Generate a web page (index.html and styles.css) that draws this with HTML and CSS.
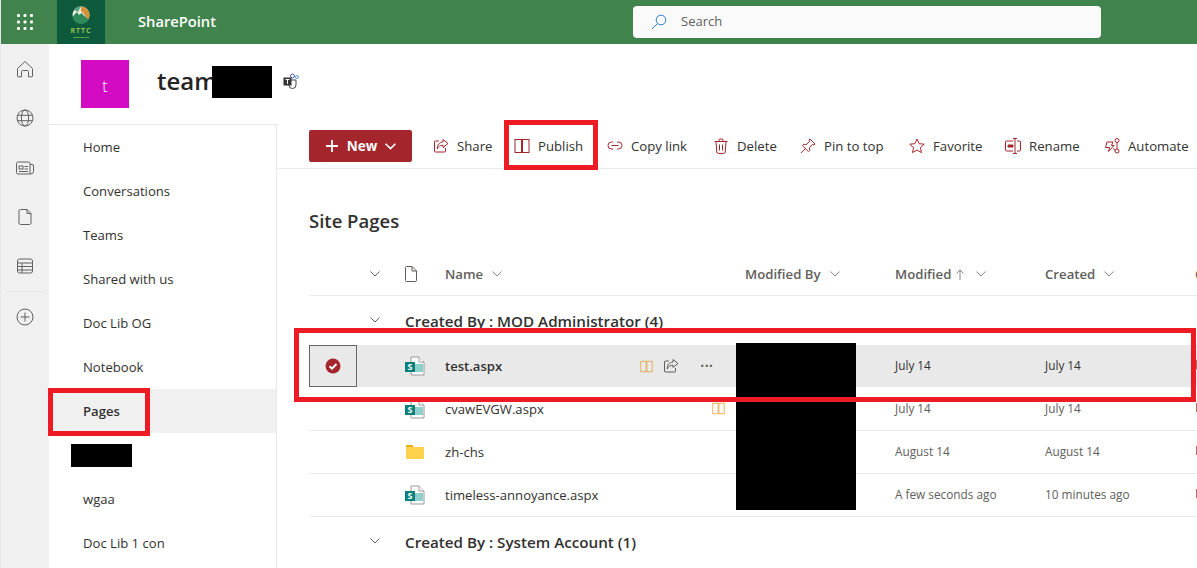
FILE: index.html
```html
<!DOCTYPE html>
<html lang="en">
<head>
  <meta charset="UTF-8">
  <meta name="viewport" content="width=device-width, initial-scale=1.0">
  <title>Site Pages - SharePoint</title>
  <link rel="stylesheet" href="styles.css">
</head>
<body>
  <svg class="defs" width="0" height="0" aria-hidden="true">
    <symbol id="i-book" viewBox="0 0 16 16">
      <rect x="1" y="1.500" width="6.500" height="13" fill="none" stroke="currentColor"/>
      <rect x="8.500" y="1.500" width="6.500" height="13" fill="none" stroke="currentColor"/>
    </symbol>
    <symbol id="i-share" viewBox="0 0 16 16">
      <path d="M6 3H2.500A1 1 0 0 0 1.500 4v9a1 1 0 0 0 1 1h9a1 1 0 0 0 1-1v-3" fill="none" stroke="currentColor"/>
      <path d="M10 1.500l5 4-5 4V7.200C7.500 7.200 5.500 8.300 4.200 11c0-4 2-6.800 5.800-7z" fill="none" stroke="currentColor"/>
    </symbol>
    <symbol id="i-page" viewBox="0 0 12 16">
      <path d="M1.500.5H7L11.500 5v9.500a1 1 0 0 1-1 1h-9a1 1 0 0 1-1-1v-13a1 1 0 0 1 1-1zM7 .5V5h4.500" fill="none" stroke="currentColor"/>
    </symbol>
    <symbol id="i-chev" viewBox="0 0 10 6">
      <path d="M.5.500 5 5 9.500.500" fill="none" stroke="currentColor"/>
    </symbol>
    <symbol id="i-spfile" viewBox="0 0 20 20">
      <path d="M6 1h8l5 5v13H6z" fill="#fff" stroke="#9a9a9a"/>
      <path d="M14 1v5h5" fill="#fff" stroke="#9a9a9a"/>
      <rect x="9" y="8" width="9" height="8" fill="#8fd0cc"/>
      <rect x="0" y="6" width="10" height="10" fill="#07807c"/>
    </symbol>
  </svg>

  <header class="topbar">
    <div class="waffle">
      <svg width="16" height="16" viewBox="0 0 16 16" fill="#fff">
        <rect x="0" y="0" width="3" height="3" rx="1"/><rect x="6.500" y="0" width="3" height="3" rx="1"/><rect x="13" y="0" width="3" height="3" rx="1"/>
        <rect x="0" y="6.500" width="3" height="3" rx="1"/><rect x="6.500" y="6.500" width="3" height="3" rx="1"/><rect x="13" y="6.500" width="3" height="3" rx="1"/>
        <rect x="0" y="13" width="3" height="3" rx="1"/><rect x="6.500" y="13" width="3" height="3" rx="1"/><rect x="13" y="13" width="3" height="3" rx="1"/>
      </svg>
    </div>
    <div class="org-logo">
      <svg width="18" height="18" viewBox="0 0 18 18">
        <circle cx="9" cy="9" r="8.500" fill="#f1efe0"/>
        <path d="M9 .5a8.500 8.500 0 0 1 8.500 8.500c0 2-.6 3.600-1.600 5L12 8 9 5z" fill="#d39238"/>
        <path d="M2 4a8.500 8.500 0 0 1 7-3.500L6 6z" fill="#5aa58a"/>
        <path d="M.6 10.500 5 6l2 3 2.500-2 3 3 4 3.500A8.500 8.500 0 0 1 .6 10.500z" fill="#2f8a5a"/>
      </svg>
      <span class="org-name">RTTC</span>
      <span class="org-line"></span>
    </div>
    <div class="app-name">SharePoint</div>
    <div class="search">
      <svg width="16" height="16" viewBox="0 0 16 16" fill="none" stroke="#2b7cd3"><circle cx="10" cy="6" r="4.800"/><path d="M6.500 9.500 1 15"/></svg>
      <span>Search</span>
    </div>
  </header>

  <div class="app">
    <aside class="rail">
      <svg width="18" height="18" viewBox="0 0 18 18" fill="none" stroke="currentColor"><path d="M1.500 8.500 9 1.500l7.500 7V16a.8.800 0 0 1-.8.800h-3.200V11.500a1 1 0 0 0-1-1h-5a1 1 0 0 0-1 1v5.300H2.300a.8.800 0 0 1-.8-.8z"/></svg>
      <svg width="18" height="18" viewBox="0 0 18 18" fill="none" stroke="currentColor"><circle cx="9" cy="9" r="8"/><ellipse cx="9" cy="9" rx="3.600" ry="8"/><path d="M1.500 6.300h15M1.500 11.700h15"/></svg>
      <svg width="18" height="18" viewBox="0 0 18 18" fill="none" stroke="currentColor"><path d="M14 15H2a1.500 1.500 0 0 1-1.500-1.500v-9A1.500 1.500 0 0 1 2 3h10.500A1.500 1.500 0 0 1 14 4.500V15a3 3 0 0 0 3.500-2.500V6L14 5"/><rect x="3" y="7" width="4" height="3"/><path d="M8.500 7.500h3.500M8.500 10h3.500M3 12.500h9"/></svg>
      <svg width="18" height="18" viewBox="0 0 18 18" fill="none" stroke="currentColor"><path d="M4.500 1.500H11L15 5.500V15a1.500 1.500 0 0 1-1.500 1.500h-9A1.500 1.500 0 0 1 3 15V3a1.500 1.500 0 0 1 1.500-1.500zM11 1.500v4h4"/></svg>
      <svg width="18" height="18" viewBox="0 0 18 18" fill="none" stroke="currentColor"><rect x="1.500" y="2" width="15" height="14" rx="2"/><path d="M1.500 6h15M1.500 9.500h15M1.500 13h15M6 6v10"/></svg>
      <div class="rail-sep"></div>
      <svg width="18" height="18" viewBox="0 0 18 18" fill="none" stroke="currentColor"><circle cx="9" cy="9" r="8"/><path d="M9 4.500v9M4.500 9h9"/></svg>
    </aside>

    <div class="site">
      <div class="site-header">
        <div class="site-logo">t</div>
        <div class="site-title">team</div>
        <svg class="teams-icon" width="16" height="16" viewBox="0 0 16 16" fill="none">
          <circle cx="9.500" cy="3" r="2" stroke="#5059a8"/>
          <circle cx="14" cy="4" r="1.500" stroke="#5b9bd5"/>
          <path d="M6 7h7v5a3.500 3.500 0 0 1-7 0z" stroke="#444"/>
          <rect x="0.500" y="4.500" width="8" height="8" fill="#333"/>
          <path d="M2.500 6.500h4M4.500 6.500v4.500" stroke="#fff"/>
        </svg>
      </div>

      <div class="site-body">
        <nav class="sidenav">
          <a class="nav-item">Home</a>
          <a class="nav-item">Conversations</a>
          <a class="nav-item">Teams</a>
          <a class="nav-item">Shared with us</a>
          <a class="nav-item">Doc Lib OG</a>
          <a class="nav-item">Notebook</a>
          <a class="nav-item active">Pages</a>
          <a class="nav-item"></a>
          <a class="nav-item">wgaa</a>
          <a class="nav-item">Doc Lib 1 con</a>
        </nav>

        <main class="content">
          <div class="commandbar">
            <button class="new-btn">
              <svg width="14" height="14" viewBox="0 0 14 14" stroke="#fff" stroke-width="1.800"><path d="M7 1v12M1 7h12"/></svg>
              <span>New</span>
              <svg width="11" height="7" stroke-width="1.500" class="white"><use href="#i-chev"/></svg>
            </button>
            <div class="cmd cmd-share"><svg class="cmd-icon"><use href="#i-share"/></svg>Share</div>
            <div class="cmd cmd-publish"><svg class="cmd-icon"><use href="#i-book"/></svg>Publish</div>
            <div class="cmd cmd-copy">
              <svg class="cmd-icon" viewBox="0 0 16 16" fill="none" stroke="currentColor"><path d="M6 4H4.500a3.500 3.500 0 0 0 0 7H6M10 4h1.500a3.500 3.500 0 0 1 0 7H10M4.500 7.500h7"/></svg>Copy link
            </div>
            <div class="cmd cmd-delete">
              <svg class="cmd-icon" viewBox="0 0 16 16" fill="none" stroke="currentColor"><path d="M1.500 3.500h13M6 3.500V2a1 1 0 0 1 1-1h2a1 1 0 0 1 1 1v1.500M3 3.500l.8 10.500a1.500 1.500 0 0 0 1.500 1.400h5.400a1.500 1.500 0 0 0 1.500-1.400L13 3.500M6.500 6.500v6M9.500 6.500v6"/></svg>Delete
            </div>
            <div class="cmd cmd-pin">
              <svg class="cmd-icon" viewBox="0 0 16 16" fill="none" stroke="currentColor"><path d="M10 1l5 5-1 .8-1.500-.3-3 3 .2 3L8.500 13.700 2.300 7.500 3.500 6.300l3 .2 3-3L9.200 2zM5.500 10.500 1 15"/></svg>Pin to top
            </div>
            <div class="cmd cmd-fav">
              <svg class="cmd-icon" viewBox="0 0 16 16" fill="none" stroke="currentColor"><path d="M8 1l2.100 4.700 5.100.5-3.800 3.400 1.100 5L8 12l-4.500 2.600 1.100-5L.8 6.200l5.100-.5z"/></svg>Favorite
            </div>
            <div class="cmd cmd-rename">
              <svg class="cmd-icon" viewBox="0 0 16 16" fill="none" stroke="currentColor"><path d="M8 3H1.500a1 1 0 0 0-1 1v8a1 1 0 0 0 1 1H8M12 3h2.500a1 1 0 0 1 1 1v8a1 1 0 0 1-1 1H12M8 .5h4M8 15.500h4M10 .5v15"/><path d="M3 7h5v2H3z" fill="currentColor"/></svg>Rename
            </div>
            <div class="cmd cmd-auto">
              <svg class="cmd-icon" viewBox="0 0 16 16" fill="none" stroke="currentColor"><path d="M3 4h6L7.500 7.500H10L4.500 13.500 5.500 9.500H1.500z"/><circle cx="13" cy="2.500" r="2"/><circle cx="13" cy="13" r="2"/><path d="M13 4.500v6.500M9 10.500l2.500 2"/></svg>Automate
            </div>
          </div>

          <h2 class="list-title">Site Pages</h2>

          <div class="row head">
            <div class="c-check"><svg class="chev"><use href="#i-chev"/></svg></div>
            <div class="c-icon"><svg class="page-icon"><use href="#i-page"/></svg></div>
            <div class="c-name">Name<svg class="chev light"><use href="#i-chev"/></svg></div>
            <div>Modified By<svg class="chev light"><use href="#i-chev"/></svg></div>
            <div>Modified<svg class="arrow" viewBox="0 0 8 11" fill="none" stroke="currentColor"><path d="M4 11V1M.5 4.500 4 1l3.500 3.500"/></svg><svg class="chev light"><use href="#i-chev"/></svg></div>
            <div>Created<svg class="chev light"><use href="#i-chev"/></svg></div>
            <div>Category</div>
          </div>

          <div class="group"><svg class="chev"><use href="#i-chev"/></svg><span>Created By : MOD Administrator (4)</span></div>

          <div class="row item selected">
            <div class="c-check"><span class="tick-cell"><svg width="16" height="16" viewBox="0 0 16 16"><circle cx="8" cy="8" r="7.500" fill="#a4262c"/><path d="M4.500 8.200 7 10.500l4.500-4.500" fill="none" stroke="#fff" stroke-width="2"/></svg></span></div>
            <div class="c-icon"><svg class="file-icon" viewBox="0 0 20 20"><use href="#i-spfile"/><text x="5" y="14" class="sp-letter">S</text></svg></div>
            <div class="c-name">
              <span class="fname">test.aspx</span>
              <span class="row-actions">
                <svg class="mini-book"><use href="#i-book"/></svg>
                <svg class="mini-share"><use href="#i-share"/></svg>
                <span class="dots">···</span>
              </span>
            </div>
            <div></div>
            <div class="date">July 14</div>
            <div class="date">July 14</div>
            <div class="edge"></div>
          </div>

          <div class="row item">
            <div class="c-check"></div>
            <div class="c-icon"><svg class="file-icon" viewBox="0 0 20 20"><use href="#i-spfile"/><text x="5" y="14" class="sp-letter">S</text></svg></div>
            <div class="c-name"><span class="fname">cvawEVGW.aspx</span><svg class="mini-book solo"><use href="#i-book"/></svg></div>
            <div></div>
            <div class="date">July 14</div>
            <div class="date">July 14</div>
            <div class="edge"></div>
          </div>

          <div class="row item">
            <div class="c-check"></div>
            <div class="c-icon">
              <svg class="file-icon" viewBox="0 0 20 20"><path d="M1 4a1 1 0 0 1 1-1h5l2 2H1z" fill="#e8a914"/><path d="M1 5h18v11a1 1 0 0 1-1 1H2a1 1 0 0 1-1-1z" fill="#ffd24d"/></svg>
            </div>
            <div class="c-name"><span class="fname">zh-chs</span></div>
            <div></div>
            <div class="date">August 14</div>
            <div class="date">August 14</div>
            <div class="edge"></div>
          </div>

          <div class="row item">
            <div class="c-check"></div>
            <div class="c-icon"><svg class="file-icon" viewBox="0 0 20 20"><use href="#i-spfile"/><text x="5" y="14" class="sp-letter">S</text></svg></div>
            <div class="c-name"><span class="fname">timeless-annoyance.aspx</span></div>
            <div></div>
            <div class="date">A few seconds ago</div>
            <div class="date">10 minutes ago</div>
            <div class="edge"></div>
          </div>

          <div class="group"><svg class="chev"><use href="#i-chev"/></svg><span>Created By : System Account (1)</span></div>
        </main>
      </div>
    </div>
  </div>

  <!-- redaction bars and red callouts drawn on top of the screenshot -->
  <div class="redact redact-title"></div>
  <div class="redact redact-nav"></div>
  <div class="redact redact-author"></div>
  <div class="callout callout-publish"></div>
  <div class="callout callout-pages"></div>
  <div class="callout callout-row"></div>
</body>
</html>
```

FILE: styles.css
```css
* {
  box-sizing: border-box;
}
body {
  margin: 0;
  height: 568px;
  overflow: hidden;
  position: relative;
  background-color: #fff;
  color: #323130;
  font-family: "Open Sans", "Noto Sans", sans-serif;
  font-size: 13px;
}
.defs {
  position: absolute;
}
.sp-letter {
  font-family: "Open Sans", sans-serif;
  font-size: 9px;
  font-weight: 700;
  fill: #fff;
  text-anchor: middle;
}

/* top bar */
.topbar {
  height: 44px;
  background-color: #41834c;
  display: flex;
  align-items: center;
  border-left: 1px solid #e8e8e8;
}
.waffle {
  width: 56px;
  height: 44px;
  display: flex;
  align-items: center;
  justify-content: center;
  padding-right: 8px;
}
.org-logo {
  width: 48px;
  height: 44px;
  background-color: #0d5a3c;
  display: flex;
  flex-direction: column;
  align-items: center;
  padding-top: 6px;
}
.org-name {
  font-size: 7px;
  line-height: 8px;
  margin-top: 3px;
  color: #8fc04f;
  font-weight: 700;
  letter-spacing: 1px;
}
.org-line {
  width: 16px;
  height: 1px;
  margin-top: 2px;
  background-color: #5f9a55;
}
.app-name {
  margin-left: 33px;
  width: 495px;
  color: #fff;
  font-size: 14.7px;
  font-weight: 600;
  padding-bottom: 2px;
}
.search {
  width: 468px;
  height: 32px;
  background-color: #fafafa;
  border-radius: 4px;
  display: flex;
  align-items: center;
  gap: 14px;
  padding-left: 18px;
  color: #605e5c;
  font-size: 13px;
}
.search span {
  padding-bottom: 2px;
}

/* left rail */
.app {
  display: flex;
  height: 524px;
}
.rail {
  width: 49px;
  background-color: #f0f0f0;
  border-left: 1px solid #e8e8e8;
  color: #616161;
  display: flex;
  flex-direction: column;
  align-items: center;
  padding-top: 16px;
  gap: 31.25px;
  flex-shrink: 0;
}
.rail-sep {
  width: 38px;
  border-top: 1px solid #e4e4e4;
  margin: -15px 0 -16px;
}

/* site header */
.site {
  flex: 1;
  min-width: 0;
}
.site-header {
  height: 80px;
  display: flex;
  align-items: center;
  padding: 0 0 8px 32px;
}
.site-logo {
  width: 48px;
  height: 48px;
  margin-top: 8px;
  padding-top: 3px;
  background-color: #d30cc3;
  color: #fff;
  font-size: 16px;
  font-weight: 300;
  display: flex;
  align-items: center;
  justify-content: center;
}
.site-title {
  margin-left: 28px;
  width: 126px;
  font-size: 24px;
  font-weight: 600;
  color: #242424;
}
.teams-icon {
  margin-top: 2px;
}

.site-body {
  display: flex;
  height: 444px;
}
.sidenav {
  width: 228px;
  flex-shrink: 0;
  border-top: 1px solid #e8e8e8;
  border-right: 1px solid #e8e8e8;
}
.nav-item {
  display: flex;
  align-items: center;
  height: 44px;
  padding-left: 34px;
  color: #323130;
  font-size: 13.1px;
}
.nav-item.active {
  background-color: #f0f0f0;
  font-weight: 600;
}

/* command bar */
.content {
  flex: 1;
  min-width: 0;
  overflow: hidden;
}
.commandbar {
  height: 45px;
  display: flex;
  align-items: center;
  padding-left: 32px;
  border-bottom: 1px solid #edebe9;
  white-space: nowrap;
}
.new-btn {
  width: 103px;
  height: 32px;
  flex-shrink: 0;
  background-color: #a4262c;
  border: none;
  border-radius: 2px;
  color: #fff;
  font-family: inherit;
  font-size: 13.5px;
  font-weight: 700;
  display: flex;
  align-items: center;
  justify-content: center;
  gap: 8px;
  margin-right: 21px;
}
.new-btn .white {
  color: #fff;
}
.cmd {
  display: flex;
  align-items: center;
  flex-shrink: 0;
  gap: 8px;
  font-size: 13.2px;
  color: #323130;
}
.cmd-icon {
  width: 16px;
  height: 16px;
  color: #a4262c;
  flex-shrink: 0;
}
.cmd-share { width: 81px; }
.cmd-publish { width: 93px; }
.cmd-copy { width: 106px; }
.cmd-delete { width: 87px; }
.cmd-pin { width: 109px; }
.cmd-fav { width: 96px; }
.cmd-rename { width: 99px; }
.cmd-auto { width: 90px; }

/* list */
.list-title {
  margin: 0;
  padding: 40px 0 0 32px;
  height: 84px;
  font-size: 18.5px;
  font-weight: 600;
  line-height: 24px;
  color: #323130;
}
.row {
  display: grid;
  grid-template-columns: 48px 88px 300px 150px 150px 150px 100px;
  margin-left: 32px;
  align-items: center;
  border-bottom: 1px solid #edebe9;
}
.row > div {
  min-width: 0;
  display: flex;
  align-items: center;
  white-space: nowrap;
}
.c-check {
  height: 100%;
}
.head {
  height: 43px;
  font-size: 13.2px;
  font-weight: 600;
  color: #605e5c;
}
.head .c-check {
  padding-left: 61px;
  overflow: visible;
}
.chev {
  width: 10px;
  height: 6px;
  color: #605e5c;
  flex-shrink: 0;
}
.chev.light {
  margin-left: 9px;
  color: #8a8886;
}
.arrow {
  width: 8px;
  height: 11px;
  margin-left: 5px;
  margin-right: 3px;
  color: #8a8886;
}
.head .c-icon,
.item .c-icon {
  padding-left: 48px;
}
.page-icon {
  width: 12px;
  height: 16px;
  color: #605e5c;
}
.group {
  height: 50px;
  margin-left: 32px;
  display: flex;
  align-items: center;
  padding-left: 61px;
  gap: 25px;
  font-size: 15.2px;
  font-weight: 600;
  color: #323130;
}
.group .chev {
  margin-top: -3px;
}
.group span {
  margin-top: -1px;
}
.item {
  height: 43px;
  font-size: 11.8px;
  color: #605e5c;
}
.date {
  padding-bottom: 3px;
}
.selected {
  background-color: #e9e9e9;
  color: #323130;
  border-bottom-color: #fff;
  margin-top: -1px;
}
.tick-cell {
  width: 48px;
  height: 42px;
  border: 1px solid #666;
  display: flex;
  align-items: center;
  justify-content: center;
}
.file-icon {
  width: 20px;
  height: 20px;
}
.fname {
  font-size: 13.1px;
  color: #323130;
}
.selected .fname {
  font-weight: 600;
}
.c-name {
  position: relative;
}
.row-actions {
  position: absolute;
  left: 195px;
  top: 50%;
  transform: translateY(-50%);
  display: flex;
  align-items: center;
  gap: 10px;
  color: #605e5c;
}
.mini-book {
  width: 13px;
  height: 13px;
  color: #e3a23c;
}
.mini-book.solo {
  position: absolute;
  left: 267px;
  top: 2px;
}
.mini-share {
  width: 16px;
  height: 16px;
  color: #605e5c;
}
.dots {
  margin-left: 11px;
  font-size: 16px;
  font-weight: 600;
  line-height: 16px;
}
.edge {
  width: 2px;
  height: 9px;
  margin-left: 1px;
  margin-bottom: 3px;
  background-color: #b0705f;
}

/* overlays */
.redact {
  position: absolute;
  background-color: #000;
}
.redact-title { left: 212px; top: 66px; width: 60px; height: 32px; }
.redact-nav { left: 71px; top: 444px; width: 61px; height: 23px; }
.redact-author { left: 736px; top: 343px; width: 120px; height: 167px; }
.callout {
  position: absolute;
  border: 5px solid #ed1c24;
}
.callout-publish { left: 504px; top: 120px; width: 94px; height: 50px; }
.callout-pages { left: 48px; top: 388px; width: 102px; height: 48px; }
.callout-row { left: 294px; top: 328px; width: 902px; height: 74px; }
```
